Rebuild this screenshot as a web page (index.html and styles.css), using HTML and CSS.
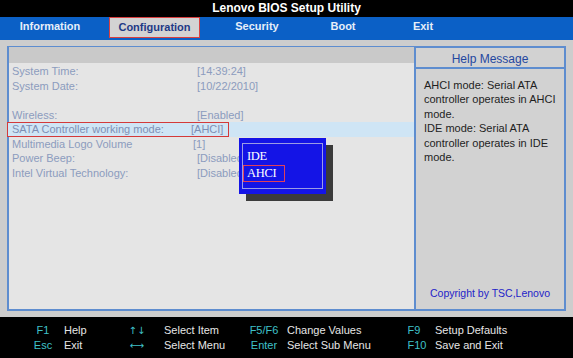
FILE: index.html
```html
<!DOCTYPE html>
<html lang="en">
<head>
    <meta charset="UTF-8">
    <title>Lenovo BIOS Setup Utility</title>
    <link rel="stylesheet" href="styles.css">
</head>
<body>

<div class="titlebar">Lenovo BIOS Setup Utility</div>

<nav class="tabs">
    <span class="tab tab-info">Information</span>
    <span class="tab tab-config active">Configuration</span>
    <span class="tab tab-security">Security</span>
    <span class="tab tab-boot">Boot</span>
    <span class="tab tab-exit">Exit</span>
</nav>

<div class="main">
    <section class="setup">
        <div class="setup-head"></div>
        <div class="items">
            <div class="row"><span class="label">System Time:</span><span class="value">[14:39:24]</span></div>
            <div class="row"><span class="label">System Date:</span><span class="value">[10/22/2010]</span></div>
            <div class="row row-blank"></div>
            <div class="row"><span class="label">Wireless:</span><span class="value">[Enabled]</span></div>
            <div class="row current">
                <div class="pick"><span class="label">SATA Controller working mode:</span><span class="value">[AHCI]</span></div>
            </div>
            <div class="row"><span class="label">Multimedia Logo Volume</span><span class="value value-tight">[1]</span></div>
            <div class="row"><span class="label">Power Beep:</span><span class="value">[Disabled]</span></div>
            <div class="row"><span class="label">Intel Virtual Technology:</span><span class="value">[Disabled]</span></div>
        </div>

        <div class="popup">
            <div class="popup-frame">
                <span class="opt">IDE</span>
                <span class="opt opt-picked">AHCI</span>
            </div>
        </div>
    </section>

    <aside class="help">
        <h2>Help Message</h2>
        <div class="help-text">
            <p>AHCI mode: Serial ATA controller operates in AHCI mode.</p>
            <p>IDE mode: Serial ATA controller operates in IDE mode.</p>
        </div>
        <div class="copyright">Copyright by TSC,Lenovo</div>
    </aside>
</div>

<footer class="keys">
    <span class="key">F1</span><span class="desc">Help</span>
    <span class="key key-arrow">&#8593;&#8595;</span><span class="desc">Select Item</span>
    <span class="key">F5/F6</span><span class="desc">Change Values</span>
    <span class="key">F9</span><span class="desc">Setup Defaults</span>

    <span class="key">Esc</span><span class="desc">Exit</span>
    <span class="key key-arrow">&#10231;</span><span class="desc">Select Menu</span>
    <span class="key">Enter</span><span class="desc">Select Sub Menu</span>
    <span class="key key-wide">F10</span><span class="desc">Save and Exit</span>
</footer>

</body>
</html>
```

FILE: styles.css
```css
body {
    font-family: 'Liberation Sans', Arial, sans-serif;
    background-color: #000000;
    margin: 0;
    padding: 0;
    width: 573px;
    height: 358px;
    overflow: hidden;
}

.titlebar {
    height: 17px;
    line-height: 17px;
    color: #FFFFFF;
    font-size: 12px;
    font-weight: bold;
    text-align: center;
}

.tabs {
    display: flex;
    align-items: flex-start;
    height: 23px;
    background-color: #0B60C6;
}

.tab {
    height: 21px;
    line-height: 19px;
    box-sizing: border-box;
    text-align: center;
    color: #FFFFFF;
    font-size: 11px;
    font-weight: bold;
    opacity: 0.9;
}

.tab-info { width: 100px; }
.tab-security { width: 114px; }
.tab-boot { width: 58px; }
.tab-exit { width: 102px; }

.tab.active {
    width: 91px;
    margin-left: 9px;
    background-color: #D3D3D3;
    border: 1px solid #D94040;
    color: #1F3A86;
    opacity: 1;
}

.main {
    display: flex;
    height: 277px;
    box-sizing: border-box;
    padding: 6px 7px 6px 7px;
    background-color: #CDCDCD;
}

.setup {
    position: relative;
    flex: 0 0 407px;
    box-sizing: border-box;
    border-left: 2px solid #5E8DCF;
    border-top: 1px solid #5E8DCF;
    border-bottom: 2px solid #5E8DCF;
    background-color: #E5E5E5;
}

.setup-head {
    height: 16px;
    background-color: #C9C9C9;
}

.items {
    padding-top: 1px;
    font-size: 11px;
    color: #8C9CBE;
}

.row {
    display: flex;
    height: 14.5px;
    line-height: 14.5px;
    padding-left: 3px;
}

.label {
    width: 185px;
    white-space: nowrap;
}

.value {
    white-space: nowrap;
}

.value-tight {
    margin-left: -4px;
}

.row.current {
    padding-left: 0;
    margin-left: -2px;
    background-color: #CFE5F5;
    color: #7E8FB4;
}

.pick {
    display: flex;
    width: 222px;
    height: 15px;
    box-sizing: border-box;
    border: 1px solid #D33A3A;
    padding-left: 4px;
    line-height: 13px;
}

.pick .label {
    width: 179px;
}

.popup {
    position: absolute;
    left: 230px;
    top: 91px;
    width: 87px;
    height: 56px;
    box-sizing: border-box;
    padding: 5px 3px;
    background-color: #1414E6;
    box-shadow: 7px 7px 0 #3B3B3B;
}

.popup-frame {
    height: 100%;
    box-sizing: border-box;
    border: 1px solid #9C9CE4;
    padding-top: 4px;
}

.opt {
    display: block;
    width: 42px;
    height: 17px;
    line-height: 15px;
    box-sizing: border-box;
    border: 1px solid transparent;
    padding-left: 3px;
    color: #FFFFFF;
    font-family: 'Liberation Serif', 'Times New Roman', serif;
    font-size: 12.5px;
    letter-spacing: -0.3px;
}

.opt-picked {
    border-color: #E0405A;
}

.help {
    flex: 1;
    display: flex;
    flex-direction: column;
    border: 2px solid #5E8DCF;
    background-color: #D2D2D2;
}

.help h2 {
    margin: 0;
    height: 21px;
    padding-top: 2px;
    box-sizing: border-box;
    line-height: 19px;
    border-bottom: 2px solid #5E8DCF;
    text-align: center;
    font-size: 12px;
    font-weight: normal;
    color: #2447A0;
}

.help-text {
    padding: 9px 4px 0 8px;
    font-size: 11px;
    line-height: 14.4px;
    color: #1E1E1E;
}

.help-text p {
    margin: 0;
}

.copyright {
    margin-top: auto;
    padding-bottom: 9px;
    text-align: center;
    font-size: 10.5px;
    line-height: 14px;
    color: #2323C8;
}

.keys {
    display: grid;
    grid-template-columns: 26px 62px 38px 93px 30px 122px 26px auto;
    grid-auto-rows: 15px;
    height: 41px;
    box-sizing: border-box;
    padding: 6px 0 0 30px;
    font-size: 11px;
    line-height: 15px;
}

.key {
    text-align: center;
    color: #3FC1C9;
}

.key-arrow {
    font-family: 'DejaVu Sans', sans-serif;
    font-size: 10px;
}

.key-wide {
    padding-left: 6px;
}

.desc {
    padding-left: 8px;
    color: #E6E6E6;
    white-space: nowrap;
}
```
